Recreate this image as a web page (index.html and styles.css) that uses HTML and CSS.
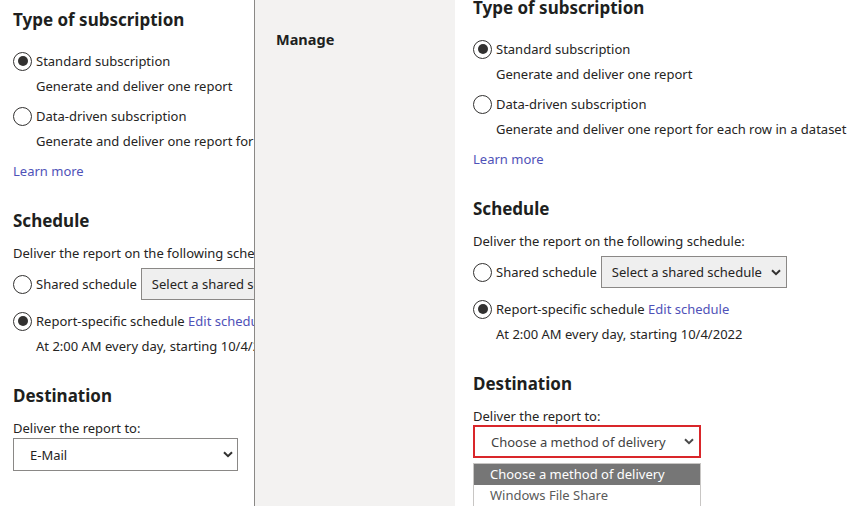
FILE: index.html
```html
<!DOCTYPE html>
<html lang="en">
<head>
<meta charset="utf-8">
<title>Subscription</title>
<link rel="stylesheet" href="styles.css">
</head>
<body>
<div class="page">
  <div class="pane pane-left">
    <div class="content">
      <h2 class="heading">Type of subscription</h2>
      <div class="opt"><span class="radio on"></span>Standard subscription</div>
      <div class="desc">Generate and deliver one report</div>
      <div class="opt opt-next"><span class="radio"></span>Data-driven subscription</div>
      <div class="desc">Generate and deliver one report for each row in a dataset</div>
      <div class="link learn">Learn more</div>

      <h2 class="heading sec">Schedule</h2>
      <div class="line lead">Deliver the report on the following schedule:</div>
      <div class="shared-row">
        <span class="radio"></span><span>Shared schedule</span>
        <div class="select select-grey">
          <span>Select a shared schedule</span>
          <svg class="chev" width="10" height="7" viewBox="0 0 10 7"><path d="M1 1.2 L5 5.2 L9 1.2" fill="none" stroke="currentColor" stroke-width="2"/></svg>
        </div>
      </div>
      <div class="opt opt-sched"><span class="radio on"></span>Report-specific schedule&nbsp;<span class="link">Edit schedule</span></div>
      <div class="desc">At 2:00 AM every day, starting 10/4/2022</div>

      <h2 class="heading sec">Destination</h2>
      <div class="line lead">Deliver the report to:</div>
      <div class="select select-mail">
        <span>E-Mail</span>
        <svg class="chev" width="10" height="7" viewBox="0 0 10 7"><path d="M1 1.2 L5 5.2 L9 1.2" fill="none" stroke="currentColor" stroke-width="2"/></svg>
      </div>
    </div>
  </div>
  <div class="divider"></div>
  <div class="nav">
    <div class="nav-title">Manage</div>
  </div>
  <div class="pane pane-right">
    <div class="content">
      <h2 class="heading">Type of subscription</h2>
      <div class="opt"><span class="radio on"></span>Standard subscription</div>
      <div class="desc">Generate and deliver one report</div>
      <div class="opt opt-next"><span class="radio"></span>Data-driven subscription</div>
      <div class="desc">Generate and deliver one report for each row in a dataset</div>
      <div class="link learn">Learn more</div>

      <h2 class="heading sec">Schedule</h2>
      <div class="line lead">Deliver the report on the following schedule:</div>
      <div class="shared-row">
        <span class="radio"></span><span>Shared schedule</span>
        <div class="select select-grey">
          <span>Select a shared schedule</span>
          <svg class="chev" width="10" height="7" viewBox="0 0 10 7"><path d="M1 1.2 L5 5.2 L9 1.2" fill="none" stroke="currentColor" stroke-width="2"/></svg>
        </div>
      </div>
      <div class="opt opt-sched"><span class="radio on"></span>Report-specific schedule&nbsp;<span class="link">Edit schedule</span></div>
      <div class="desc">At 2:00 AM every day, starting 10/4/2022</div>

      <h2 class="heading sec">Destination</h2>
      <div class="line lead">Deliver the report to:</div>
      <div class="select select-error">
        <span>Choose a method of delivery</span>
        <svg class="chev" width="10" height="7" viewBox="0 0 10 7"><path d="M1 1.2 L5 5.2 L9 1.2" fill="none" stroke="currentColor" stroke-width="2"/></svg>
      </div>
      <ul class="listbox">
        <li class="item selected">Choose a method of delivery</li>
        <li class="item">Windows File Share</li>
      </ul>
    </div>
  </div>
</div>
</body>
</html>
```

FILE: styles.css
```css
* { box-sizing: border-box; }
html, body { margin: 0; padding: 0; background: #fff; }
body {
  font-family: "Noto Sans", "Open Sans", sans-serif;
  font-size: 13px;
  color: #252423;
}
.page {
  display: flex;
  width: 864px;
  height: 506px;
  overflow: hidden;
}
.pane { background: #fff; overflow: hidden; }
.pane-left { width: 254px; flex: none; }
.pane-right { flex: 1; }
.content { white-space: nowrap; }
.pane-left .content { padding: 7px 0 0 13px; }
.pane-right .content { padding: 0 0 0 18px; margin-top: -5px; }

.divider { width: 1px; flex: none; background: #8a8886; }
.nav { width: 200px; flex: none; background: #f3f2f1; }
.nav-title {
  margin: 27px 0 0 21px;
  font-weight: 700;
  font-size: 14.5px;
  line-height: 24px;
  color: #201f1e;
}

.heading {
  margin: 0;
  font-size: 17px;
  font-weight: 700;
  line-height: 26px;
  height: 26px;
  color: #201f1e;
}
.heading.sec { margin-top: 27px; }

.opt {
  display: flex;
  align-items: center;
  height: 24px;
  line-height: 24px;
  margin-top: 16px;
}
.opt-next { margin-top: 8px; }
.opt-sched { margin-top: 9px; }
.radio {
  width: 19px;
  height: 19px;
  border: 1.5px solid #323130;
  border-radius: 50%;
  flex: none;
  margin-right: 4px;
  display: flex;
  align-items: center;
  justify-content: center;
  background: #fff;
}
.radio.on::after {
  content: "";
  width: 10px;
  height: 10px;
  border-radius: 50%;
  background: #323130;
}
.desc {
  height: 20px;
  line-height: 20px;
  margin-top: 3px;
  padding-left: 23px;
}
.link { color: #4f52b8; }
.learn { height: 20px; line-height: 20px; margin-top: 10px; }
.line { height: 20px; line-height: 20px; }
.lead { margin-top: 9px; }

.shared-row {
  display: flex;
  align-items: center;
  height: 32px;
  margin-top: 5px;
}
.shared-row .select { margin-left: 4px; }

.select {
  display: flex;
  align-items: center;
  justify-content: space-between;
  flex: none;
}
.chev { flex: none; color: #323130; }
.select-grey {
  width: 186px;
  height: 32px;
  background: #efefef;
  border: 1px solid #8a8886;
  padding: 0 5px 0 10px;
}
.select-mail {
  width: 225px;
  height: 33px;
  border: 1px solid #8a8886;
  padding: 0 4px 0 16px;
}
.select-error {
  width: 228px;
  height: 33px;
  margin-top: -1px;
  border: 2px solid #d9262a;
  padding: 0 5px 0 16px;
  color: #424242;
}
.select-error .chev { color: #4a4a4a; }

.listbox {
  list-style: none;
  margin: 5px 0 0;
  padding: 0;
  width: 228px;
  border: 1px solid #c8c6c4;
  border-bottom: none;
}
.item {
  height: 21px;
  line-height: 21px;
  padding-left: 16px;
  color: #5a5a5a;
}
.item.selected { background: #767676; color: #fff; }
```
